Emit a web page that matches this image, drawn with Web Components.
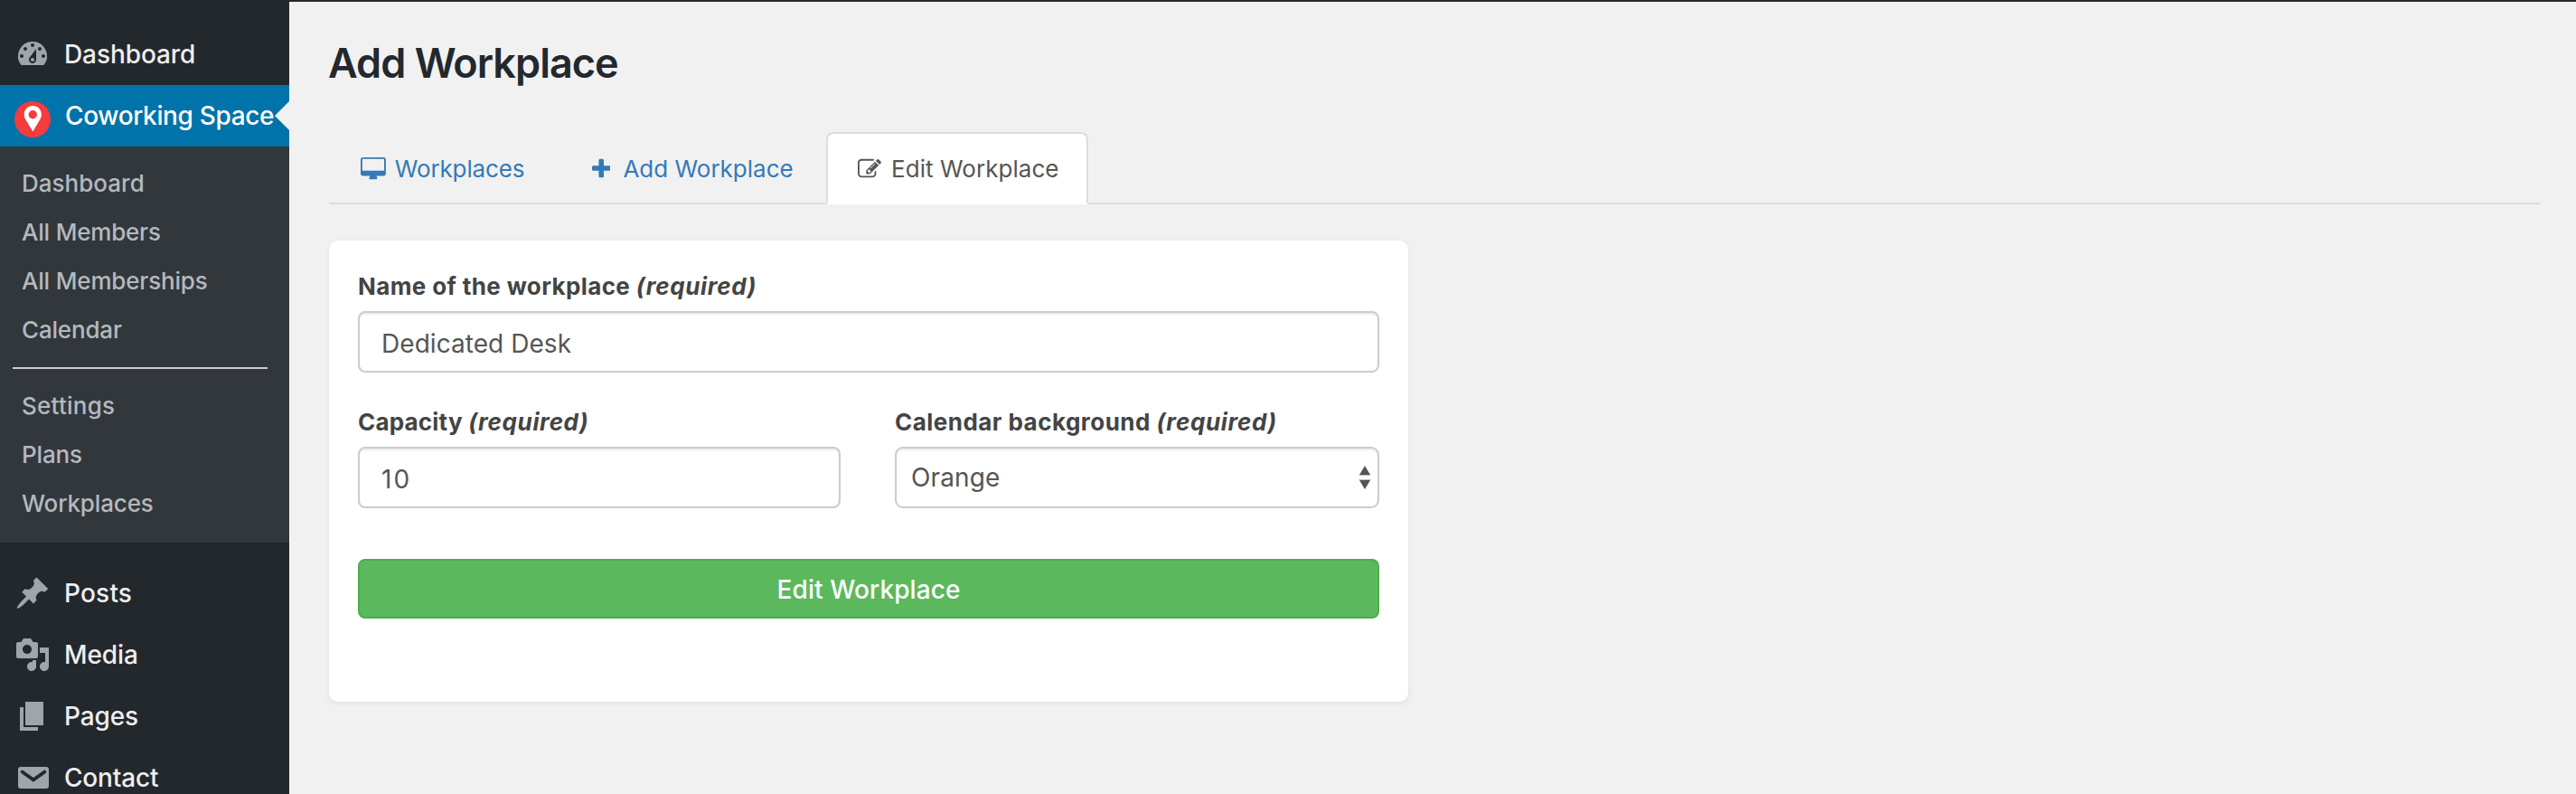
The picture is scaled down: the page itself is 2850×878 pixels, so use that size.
<!DOCTYPE html>
<html lang="en">
<head>
<meta charset="utf-8">
<title>Add Workplace</title>
<style>
html, body { margin: 0; height: 100%; }
body { background: #f1f1f1; font-family: Inter, "Liberation Sans", sans-serif; overflow: hidden; }
</style>
</head>
<body>
<admin-shell>
  <admin-sidebar slot="nav">
    <menu-item icon="dashboard" ls="-.09">Dashboard</menu-item>
    <menu-item icon="pin" ls="-.36" active>Coworking Space</menu-item>
    <sub-menu>
      <sub-item ls=".02">Dashboard</sub-item>
      <sub-item ls="-.2">All Members</sub-item>
      <sub-item ls="-.18">All Memberships</sub-item>
      <sub-item ls="-.17">Calendar</sub-item>
      <menu-rule></menu-rule>
      <sub-item ls=".25">Settings</sub-item>
      <sub-item ls="-.13">Plans</sub-item>
      <sub-item ls="-.15">Workplaces</sub-item>
    </sub-menu>
    <menu-item icon="post" ls=".2">Posts</menu-item>
    <menu-item icon="media" ls="-.09">Media</menu-item>
    <menu-item icon="page" ls="-.13">Pages</menu-item>
    <menu-item icon="email" ls="-.17">Contact</menu-item>
  </admin-sidebar>
  <page-title>Add Workplace</page-title>
  <tab-bar>
    <tab-item icon="desktop" style="--w:252px;--gap:10px;--ls:-.15px">Workplaces</tab-item>
    <tab-item icon="plus" style="--w:290px;--gap:14px;--ls:0px">Add Workplace</tab-item>
    <tab-item icon="edit" style="--w:290px;--gap:11px;--ls:.05px" active>Edit Workplace</tab-item>
  </tab-bar>
  <form-card>
    <form-field label="Name of the workplace" style="--ls:.38px"><text-input style="--ls:.05px">Dedicated Desk</text-input></form-field>
    <form-row>
      <form-field label="Capacity" style="--ls:.2px"><text-input style="--ls:2px">10</text-input></form-field>
      <form-field label="Calendar background" style="--ls:.47px"><select-box>Orange</select-box></form-field>
    </form-row>
    <submit-button>Edit Workplace</submit-button>
  </form-card>
</admin-shell>
<script>
const ICONS = {
  dashboard: ['0 0 20 20', 40, 40, '<path d="M3.76 16h12.48A7.998 7.998 0 0 0 10 3a7.998 7.998 0 0 0-6.24 13zM10 4c.55 0 1 .45 1 1s-.45 1-1 1-1-.45-1-1 .45-1 1-1zM6 6c.55 0 1 .45 1 1s-.45 1-1 1-1-.45-1-1 .45-1 1-1zm8 0c.55 0 1 .45 1 1s-.45 1-1 1-1-.45-1-1 .45-1 1-1zm-5.37 5.55L12 7v6c0 1.1-.9 2-2 2s-2-.9-2-2c0-.57.24-1.08.63-1.45zM4 10c.55 0 1 .45 1 1s-.45 1-1 1-1-.45-1-1 .45-1 1-1zm12 0c.55 0 1 .45 1 1s-.45 1-1 1-1-.45-1-1 .45-1 1-1zm-5 3c0-.55-.45-1-1-1s-1 .45-1 1 .45 1 1 1 1-.45 1-1z"/>'],
  pin: ['0 0 40 40', 40, 40, '<circle cx="20" cy="20" r="20" fill="#f43c3c"/><path fill="#fff" fill-rule="evenodd" d="M20.3 5c-5.4 0-9.6 4.2-9.6 9.4 0 2.3.7 4 1.8 6.200l7.800 13 7.800-13c1.100-2.200 1.800-3.900 1.800-6.200C29.900 9.200 25.700 5 20.300 5zm0 5a4.700 4.700 0 1 1 0 9.400a4.700 4.700 0 0 1 0-9.400z"/>'],
  post: ['0 0 20 20', 40, 40, '<path d="M10.44 3.02l1.82-1.82 6.36 6.35-1.83 1.82c-1.05-.68-2.48-.57-3.41.36l-.75.75c-.92.93-1.04 2.35-.35 3.41l-1.83 1.82-2.41-2.41-2.8 2.79c-.42.42-3.38 2.71-3.8 2.29s1.86-3.39 2.28-3.81l2.79-2.79L4.1 9.36l1.83-1.82c1.05.69 2.48.57 3.4-.36l.75-.75c.93-.92 1.05-2.35.36-3.41z"/>'],
  media: ['0 0 20 20', 40, 40, '<path d="M13 11V4c0-.55-.45-1-1-1h-1.670L9 1H5L3.670 3H2c-.55 0-1 .45-1 1v7c0 .55.45 1 1 1h10c.55 0 1-.45 1-1zM7 4.500c1.380 0 2.500 1.120 2.500 2.500S8.380 9.500 7 9.500 4.500 8.380 4.500 7 5.620 4.500 7 4.500zM14 6h5v10.500c0 1.380-1.120 2.500-2.500 2.500S14 17.880 14 16.500s1.120-2.500 2.500-2.500c.17 0 .34.02.5.05V9h-3V6zm-4 8.050V13h2v3.500c0 1.380-1.120 2.500-2.500 2.500S7 17.880 7 16.500 8.120 14 9.500 14c.17 0 .34.02.5.05z"/>'],
  page: ['0 0 20 20', 40, 40, '<path d="M6 15V2h10v13H6zm-1 1h8v2H3V5h2v11z"/>'],
  email: ['0 0 20 20', 40, 40, '<rect x="2" y="4" width="17" height="12" rx="1.5"/><path d="M4.300 6.750L10.500 11.200L16.700 6.750" fill="none" stroke="#23282d" stroke-width="1.900" stroke-linecap="round"/>'],
  desktop: ['-64 0 1920 1792', 27.86, 26, '<path d="M1728 992v-832q0-13-9.500-22.500t-22.500-9.500h-1600q-13 0-22.500 9.500t-9.500 22.500v832q0 13 9.500 22.500t22.500 9.500h1600q13 0 22.500-9.500t9.500-22.500zm128-832v1088q0 66-47 113t-113 47h-544q0 37 16 77.500t32 71 16 43.500q0 26-19 45t-45 19h-512q-26 0-45-19t-19-45q0-14 16-44t32-70 16-78h-544q-66 0-113-47t-47-113v-1088q0-66 47-113t113-47h1600q66 0 113 47t47 113z"/>'],
  plus: ['192 0 1408 1792', 20.43, 26, '<path d="M1600 736v192q0 40-28 68t-68 28h-416v416q0 40-28 68t-68 28h-192q-40 0-68-28t-28-68v-416h-416q-40 0-68-28t-28-68v-192q0-40 28-68t68-28h416v-416q0-40 28-68t68-28h192q40 0 68 28t28 68v416h416q40 0 68 28t28 68z"/>'],
  edit: ['0 0 1792 1792', 26, 26, '<path d="M888 1184l116-116-152-152-116 116v56h96v96h56zm440-720q-16-16-33 1l-350 350q-17 17-1 33t33-1l350-350q17-17 1-33zm80 594v190q0 119-84.500 203.500t-203.500 84.500h-832q-119 0-203.500-84.500t-84.500-203.500v-832q0-119 84.500-203.500t203.500-84.500h832q63 0 117 25 15 7 18 23 3 17-9 29l-49 49q-14 14-32 8-23-6-45-6h-832q-66 0-113 47t-47 113v832q0 66 47 113t113 47h832q66 0 113-47t47-113v-126q0-13 9-22l64-64q15-15 35-7t20 29zm-96-738l288 288-672 672h-288v-288zm444 132l-92 92-288-288 92-92q28-28 68-28t68 28l152 152q28 28 28 68t-28 68z"/>']
};
const svg = name => {
  const [box, w, h, body] = ICONS[name];
  return `<svg viewBox="${box}" width="${w}" height="${h}" fill="currentColor" aria-hidden="true">${body}</svg>`;
};
function define(tag, render) {
  customElements.define(tag, class extends HTMLElement {
    constructor() {
      super();
      this.attachShadow({ mode: 'open' }).innerHTML = render(this);
    }
  });
}

define('admin-shell', () => `<style>
  :host { display: grid; grid-template-columns: 320px 1fr; height: 878px; overflow: hidden; }
  main { border-top: 2px solid #23282d; padding: 0 40px 0 44px; }
</style><slot name="nav"></slot><main><slot></slot></main>`);

define('admin-sidebar', () => `<style>
  :host { display: block; box-sizing: border-box; background: #23282d; padding-top: 26px; height: 878px; overflow: hidden; }
</style><nav><slot></slot></nav>`);

define('menu-item', el => `<style>
  :host { display: flex; align-items: center; height: 68px; padding-left: 16px; color: #eee; font-size: 28px; font-weight: 500; line-height: 68px; white-space: nowrap; position: relative; }
  :host([active]) { background: #0073aa; color: #fff; }
  svg { flex: none; margin-right: 15px; color: #a0a5aa; }
  :host([active]) svg { margin-top: 8px; margin-right: 16px; }
  :host([active])::after { content: ""; position: absolute; right: 0; top: 18px; border: 16px solid transparent; border-left: 0; border-right-color: #f1f1f1; }
  span { letter-spacing: ${el.getAttribute('ls')}px; }
</style>${svg(el.getAttribute('icon'))}<span><slot></slot></span>`);

define('sub-menu', () => `<style>
  :host { display: block; background: #32373c; padding: 14px 0 16px; margin-bottom: 22px; }
</style><slot></slot>`);

define('sub-item', el => `<style>
  :host { display: block; padding-left: 24px; font-size: 26px; font-weight: 450; line-height: 54px; color: #b4b9be; letter-spacing: ${el.getAttribute('ls')}px; }
</style><slot></slot>`);

define('menu-rule', () => `<style>
  :host { display: block; height: 2px; margin: 14px 24px 14px 14px; background: #ccc; }
</style>`);

define('page-title', () => `<style>
  :host { display: block; padding-top: 38px; }
  h1 { margin: 0 0 0 -1px; font-size: 45px; line-height: 60px; font-weight: 600; letter-spacing: -.97px; color: #23282d; }
</style><h1><slot></slot></h1>`);

define('tab-bar', () => `<style>
  :host { display: flex; gap: 4px; box-sizing: border-box; height: 80px; margin-top: 46px; border-bottom: 2px solid #ddd; }
</style><slot></slot>`);

define('tab-item', el => `<style>
  :host { display: flex; align-items: center; box-sizing: border-box; width: var(--w); height: 80px; padding: 2px 0 0 33px; border: 2px solid transparent; border-radius: 8px 8px 0 0; color: #337ab7; font-size: 26px; line-height: 74px; letter-spacing: var(--ls); white-space: nowrap; }
  :host([active]) { color: #555; background: #fff; border-color: #ddd; border-bottom-color: #fff; }
  svg { flex: none; margin-right: var(--gap); }
</style>${svg(el.getAttribute('icon'))}<slot></slot>`);

define('form-card', () => `<style>
  :host { display: block; box-sizing: border-box; width: 1194px; height: 510px; margin-top: 40px; padding: 31px 32px 0; background: #fff; border-radius: 10px; box-shadow: 0 2px 6px rgba(0,0,0,.07); }
</style><slot></slot>`);

define('form-row', () => `<style>
  :host { display: grid; grid-template-columns: 534px 536px; column-gap: 60px; margin-top: 35px; }
</style><slot></slot>`);

define('form-field', el => `<style>
  :host { display: block; }
  label { display: block; margin-bottom: 7px; font-size: 26px; line-height: 40px; font-weight: 700; color: #444; letter-spacing: var(--ls); white-space: nowrap; }
  em { letter-spacing: .62px; }
</style><label>${el.getAttribute('label')} <em>(required)</em></label><slot></slot>`);

define('text-input', () => `<style>
  :host { display: block; box-sizing: border-box; height: 68px; padding: 2px 24px 0; border: 2px solid #ccc; border-radius: 8px; background: #fff; box-shadow: inset 0 2px 2px rgba(0,0,0,.075); font-size: 28px; line-height: 64px; color: #555; letter-spacing: var(--ls); }
</style><slot></slot>`);

define('select-box', () => `<style>
  :host { display: flex; justify-content: space-between; align-items: center; box-sizing: border-box; height: 68px; padding: 0 7px 0 16px; border: 2px solid #ccc; border-radius: 9px; background: #fff; box-shadow: inset 0 2px 2px rgba(0,0,0,.075); font-size: 28px; line-height: 64px; color: #555; letter-spacing: .12px; }
</style><slot></slot><svg width="14" height="28" viewBox="0 0 14 28" fill="#555"><path d="M7 1l6 10H1zM7 27l6-10H1z"/><path fill="#bbb" d="M.5 11h13v1H.5zM.5 16h13v1H.5z"/></svg>`);

define('submit-button', () => `<style>
  :host { display: block; margin-top: 56px; }
  button { display: block; box-sizing: border-box; width: 100%; height: 66px; padding: 2px 0 0; border: 2px solid #4cae4c; border-radius: 8px; background: #5cb85c; color: #fff; font: 450 28px/60px Inter, "Liberation Sans", sans-serif; letter-spacing: .1px; }
</style><button type="button"><slot></slot></button>`);
</script>
</body>
</html>
